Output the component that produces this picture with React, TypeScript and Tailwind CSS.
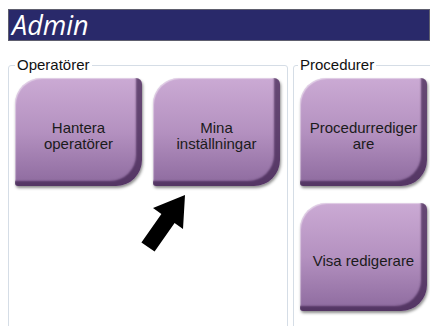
import React from 'react'

interface TileProps {
  lines: string[]
}

const Tile: React.FC<TileProps> = ({ lines }) => {
  return (
    <button
      className="w-[127px] h-[108px] shrink-0 flex flex-col items-center justify-center pt-[7px] rounded-tl-[26px] rounded-tr-[6px] rounded-br-[26px] rounded-bl-[3px] bg-linear-to-b from-[#cbaad4] via-[#b491c0] to-[#8d6a9e] shadow-[inset_-6px_-5px_2px_rgba(60,32,75,0.7),inset_1px_1px_1px_rgba(255,255,255,0.45),1px_2px_3px_rgba(0,0,0,0.45)] text-[15px] leading-[16px] text-[#1b1b1b] font-['Liberation_Sans',Arial,sans-serif]"
    >
      {lines.map(line => (
        <span key={line} className="block whitespace-nowrap">
          {line}
        </span>
      ))}
    </button>
  )
}

export default function App() {
  return (
    <div className="relative w-[430px] h-[326px] overflow-hidden bg-white font-['Liberation_Sans',Arial,sans-serif]">
      {/* Title bar */}
      <div className="mt-[9px] ml-[8px] h-[32px] bg-[#29296a] border border-[#5e5e6e] flex items-center pl-[3px]">
        <span className="text-white italic text-[27px] leading-none font-['Open_Sans',sans-serif] -mt-[2px]">
          Admin
        </span>
      </div>

      <div className="flex mt-[16px]">
        {/* Operatörer */}
        <fieldset className="ml-[8px] w-[280px] h-[300px] shrink-0 border border-[#d5dde6] rounded-[3px] pl-[6px] pt-[5px]">
          <legend className="px-[2px] text-[15px] leading-[16px] text-[#111]">Operatörer</legend>
          <div className="flex gap-[11px]">
            <Tile lines={['Hantera', 'operatörer']} />
            <Tile lines={['Mina', 'inställningar']} />
          </div>
        </fieldset>

        {/* Procedurer */}
        <fieldset className="ml-[5px] w-[160px] h-[300px] shrink-0 border border-[#d5dde6] rounded-[3px] pl-[6px] pt-[5px]">
          <legend className="-ml-[2px] px-[2px] text-[15px] leading-[16px] text-[#111]">Procedurer</legend>
          <div className="flex flex-col gap-[17px]">
            <Tile lines={['Procedurrediger', 'are']} />
            <Tile lines={['Visa redigerare']} />
          </div>
        </fieldset>
      </div>

      {/* Pointer arrow */}
      <svg className="absolute left-0 top-0 pointer-events-none" width="430" height="326" viewBox="0 0 430 326">
        <polygon
          points="185,195 183,229 174.6,223 154.6,251.6 141.4,242.4 161.4,214 153,208"
          fill="#000"
        />
      </svg>
    </div>
  )
}
